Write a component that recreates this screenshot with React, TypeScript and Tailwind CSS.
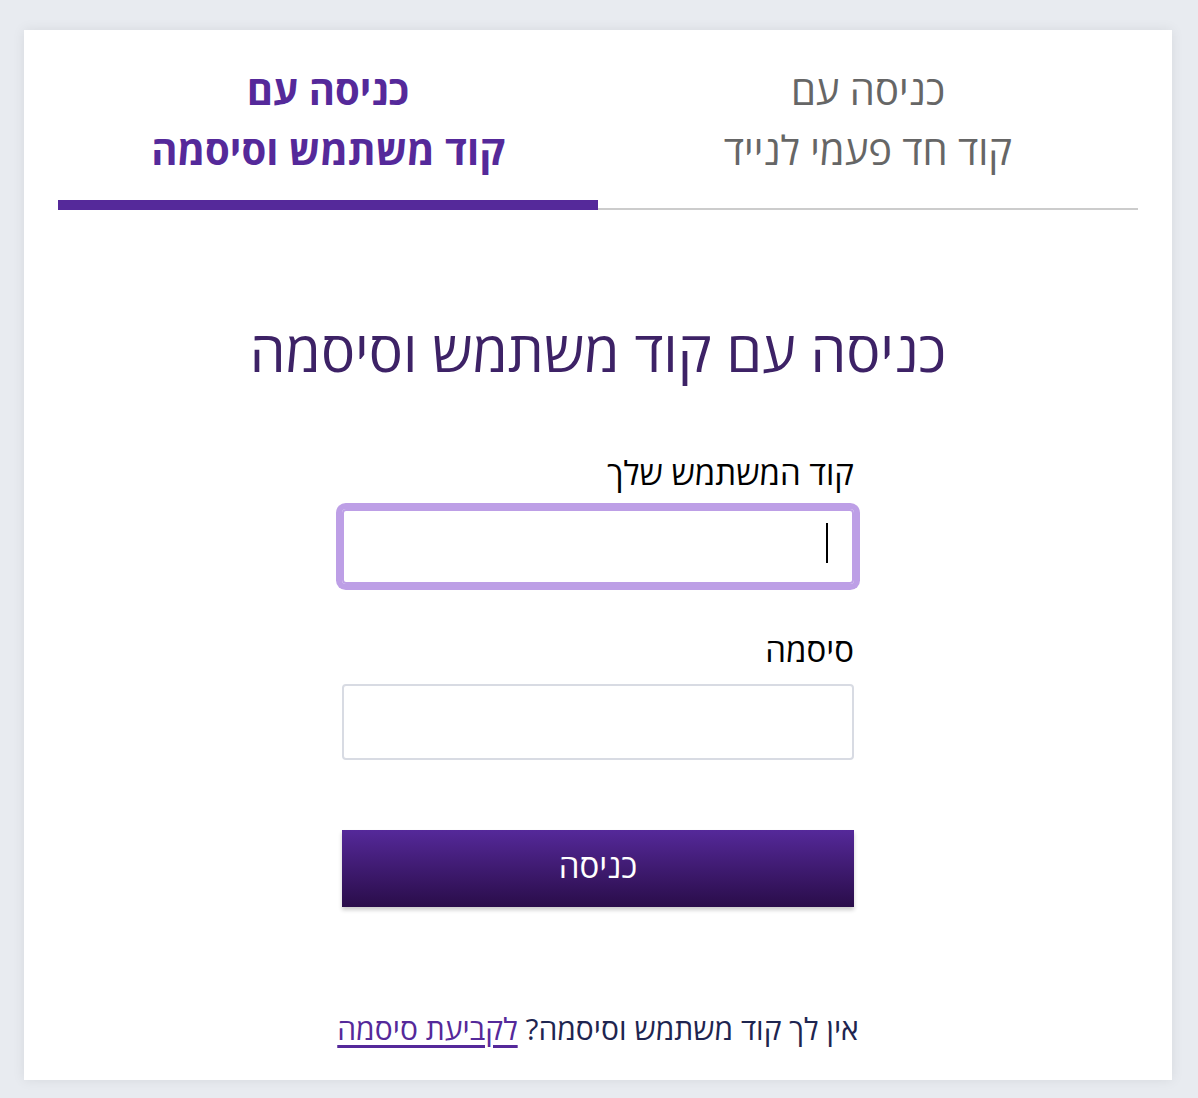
import { useEffect, useRef } from "react";

export default function App() {
  const userRef = useRef<HTMLInputElement>(null);

  useEffect(() => {
    userRef.current?.focus();
  }, []);

  return (
    <div
      dir="rtl"
      className="min-h-[1098px] bg-[#e8ebf0] pt-[30px] pb-[18px] pl-[24px] pr-[26px]"
      style={{ fontFamily: '"Open Sans", "DejaVu Sans", sans-serif' }}
    >
      <div className="bg-white shadow-[0_0_12px_rgba(0,0,0,0.08)] px-[34px] pt-[30px] h-[1050px]">
        {/* tabs */}
        <div className="flex">
          <button className="flex-1 flex flex-col justify-start items-center border-b-2 border-[#cccccc] text-[#666666] text-[40px] leading-[60px] pb-[28px] pt-0">
            <span>כניסה עם</span>
            <span>קוד חד פעמי לנייד</span>
          </button>
          <button className="flex-1 flex flex-col items-center border-b-[10px] border-[#55299a] text-[#55299a] font-bold text-[40px] leading-[60px] pb-[20px]">
            <span>כניסה עם</span>
            <span>קוד משתמש וסיסמה</span>
          </button>
        </div>

        <h1 className="text-center text-[#3d2266] text-[57px] leading-[60px] mt-[110px]">
          כניסה עם קוד משתמש וסיסמה
        </h1>

        <form className="w-[512px] mx-auto mt-[73px]" onSubmit={(e) => e.preventDefault()}>
          <label className="block text-black text-[33px] leading-[40px] mb-[16px]" htmlFor="user">
            קוד המשתמש שלך
          </label>
          <div className="relative">
            <input
              id="user"
              ref={userRef}
              type="text"
              className="block w-full h-[75px] rounded-[4px] border-2 border-[#bd9fe6] outline-none ring-[6px] ring-[#bd9fe6] px-[24px] text-[28px] caret-transparent"
            />
            {/* caret */}
            <span className="absolute right-[26px] top-[14px] h-[40px] w-[2px] bg-black" />
          </div>

          <label className="block text-black text-[33px] leading-[40px] mt-[46px] mb-[14px]" htmlFor="pass">
            סיסמה
          </label>
          <input
            id="pass"
            type="password"
            className="block w-full h-[76px] rounded-[4px] border-2 border-[#d8dbe3] outline-none px-[24px] text-[28px]"
          />

          <button
            type="submit"
            className="block w-full h-[77px] mt-[70px] bg-gradient-to-b from-[#55299a] to-[#2a0d4a] text-white text-[33px] leading-[40px] pb-[6px] shadow-[0_3px_4px_rgba(0,0,0,0.2)]"
          >
            כניסה
          </button>
        </form>

        <p className="text-center text-[#1e2550] text-[30px] leading-[40px] mt-[102px]">
          אין לך קוד משתמש וסיסמה?{" "}
          <a href="#" className="text-[#55299a] underline underline-offset-[5px]">
            לקביעת סיסמה
          </a>
        </p>
      </div>
    </div>
  );
}
